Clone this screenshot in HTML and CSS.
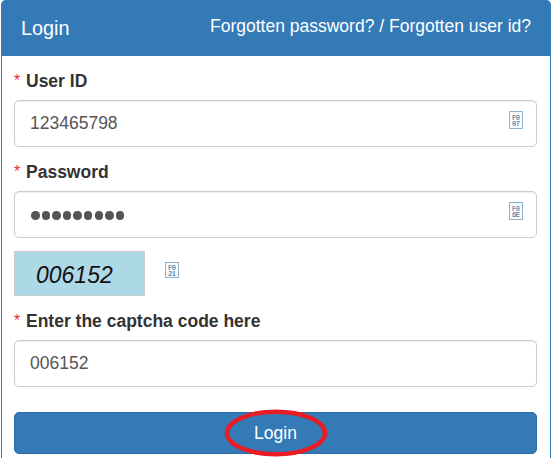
FILE: index.html
```html
<!DOCTYPE html>
<html lang="en">
<head>
    <meta charset="UTF-8">
    <meta name="viewport" content="width=device-width, initial-scale=1.0">
    <title>Login</title>
    <link rel="stylesheet" href="styles.css">
</head>
<body>
    <div class="panel">
        <div class="panel-heading">
            <div class="panel-title">Login</div>
            <div class="forgot"><a href="#">Forgotten password?</a> / <a href="#">Forgotten user id?</a></div>
        </div>
        <form class="panel-body">
            <label for="userid"><span class="required">*</span>User ID</label>
            <div class="field">
                <input type="text" id="userid" value="123465798">
                <svg class="field-icon" width="14" height="18" viewBox="0 0 14 18">
                    <rect x="0.5" y="0.5" width="13" height="17"/>
                    <text x="3" y="8.5" textLength="8">F0</text>
                    <text x="3" y="15" textLength="8">07</text>
                </svg>
            </div>

            <label for="password"><span class="required">*</span>Password</label>
            <div class="field">
                <div class="input password" id="password">
                    <i></i><i></i><i></i><i></i><i></i><i></i><i></i><i></i><i></i>
                </div>
                <svg class="field-icon" width="14" height="18" viewBox="0 0 14 18">
                    <rect x="0.5" y="0.5" width="13" height="17"/>
                    <text x="3" y="8.5" textLength="8">F0</text>
                    <text x="3" y="15" textLength="8">6E</text>
                </svg>
            </div>

            <div class="captcha-row">
                <div class="captcha">006152</div>
                <svg class="refresh" width="14" height="16" viewBox="0 0 14 16">
                    <rect x="0.5" y="0.5" width="13" height="15"/>
                    <text x="3" y="7.5" textLength="8">F0</text>
                    <text x="3" y="14" textLength="8">21</text>
                </svg>
            </div>

            <label for="code"><span class="required">*</span>Enter the captcha code here</label>
            <div class="field">
                <input type="text" id="code" value="006152">
            </div>

            <button type="button" class="btn">Login
                <svg class="marker" width="104" height="48" viewBox="0 0 104 48">
                    <ellipse cx="52" cy="24" rx="49" ry="21.3"/>
                </svg>
            </button>
        </form>
    </div>
</body>
</html>
```

FILE: styles.css
```css
* {
    box-sizing: border-box;
    margin: 0;
    padding: 0;
    font-family: "Liberation Sans", Arial, sans-serif;
}

body {
    background: #fff;
    color: #333;
    font-size: 17.5px;
    height: 458px;
    padding: 0 1px;
    overflow: hidden;
}

.panel {
    height: 470px;
    border: 1px solid #337ab7;
    border-top: none;
    border-radius: 5px 5px 0 0;
}

.panel-heading {
    display: flex;
    justify-content: space-between;
    height: 56px;
    padding: 0 19px 0 19px;
    background: #337ab7;
    border-radius: 4px 4px 0 0;
    color: #fff;
    white-space: nowrap;
}

.panel-title {
    font-size: 19.8px;
    line-height: 56px;
}

.forgot {
    line-height: 52px;
}

.forgot a {
    color: #fff;
    text-decoration: none;
}

.panel-body {
    padding: 12px 13px 0 12px;
}

label {
    display: block;
    height: 32px;
    line-height: 26px;
    font-weight: bold;
}

.required {
    display: inline-block;
    width: 12px;
    color: #ee1c3a;
    font-size: 16px;
    font-weight: normal;
    line-height: 20px;
    vertical-align: 1px;
}

.field {
    position: relative;
    margin-bottom: 12px;
}

input, .input {
    display: block;
    width: 100%;
    height: 47px;
    padding: 0 15px;
    border: 1px solid #ccc;
    border-radius: 5px;
    box-shadow: inset 0 1px 1px rgba(0, 0, 0, 0.075);
    background: #fff;
    color: #555;
    font-size: 17.5px;
}

.password {
    display: flex;
    align-items: center;
    gap: 2.1px;
    padding: 2px 16px 0;
}

.password i {
    width: 8.5px;
    height: 8.5px;
    border-radius: 50%;
    background: #555;
}

.field-icon {
    position: absolute;
    top: 11px;
    right: 14px;
}

svg rect {
    fill: #f6fbfd;
    stroke: #8fb3cb;
}

svg text {
    fill: #2a6089;
    font-family: "Liberation Mono", monospace;
    font-size: 7px;
}

.captcha-row {
    display: flex;
    align-items: flex-start;
    gap: 20px;
    height: 58px;
    padding-top: 1px;
}

.captcha {
    width: 131px;
    height: 45px;
    padding-left: 21px;
    border: 1px solid #ccc;
    background: #add8e6;
    color: #111;
    font-size: 23px;
    font-style: italic;
    line-height: 47px;
}

.refresh {
    margin-top: 11px;
}

.btn {
    position: relative;
    display: block;
    width: 100%;
    height: 42px;
    margin-top: 25px;
    border: 1px solid #2e6da4;
    border-radius: 5px;
    background: #337ab7;
    color: #fff;
    font-size: 17.5px;
    cursor: pointer;
}

.marker {
    position: absolute;
    top: -4px;
    left: 209px;
}

.marker ellipse {
    fill: none;
    stroke: #e81c24;
    stroke-width: 4.5;
}
```
